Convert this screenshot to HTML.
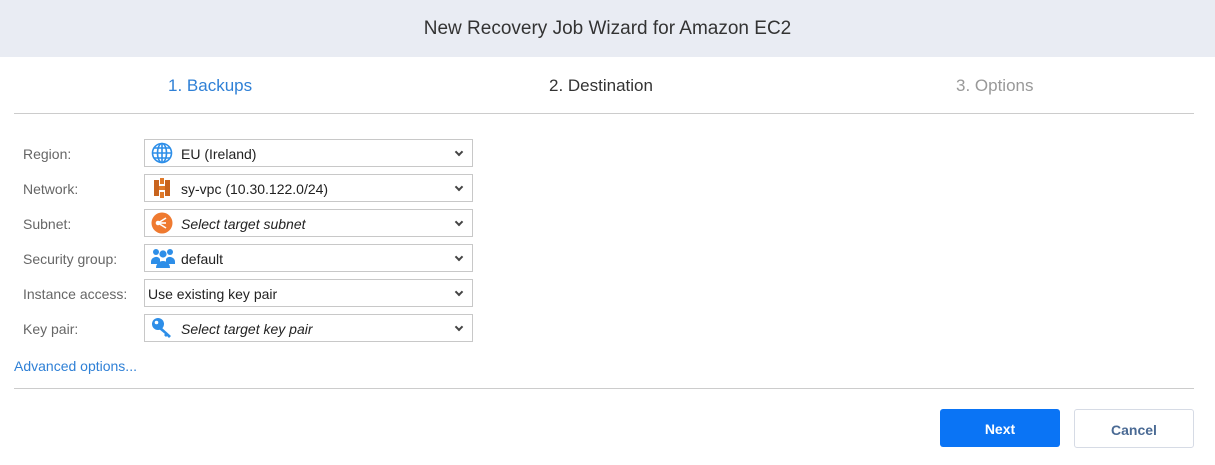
<!DOCTYPE html>
<html><head><style>
body{margin:0;width:1215px;height:465px;background:#fff;font-family:"Liberation Sans",sans-serif;position:relative;overflow:hidden}
.hdr{position:absolute;left:0;top:0;width:1215px;height:57px;background:#e9ecf3;text-align:center;line-height:57px;font-size:19px;color:#333}
.tab{position:absolute;top:76px;font-size:17px}
.line{position:absolute;left:14px;width:1180px;height:1px;background:#ccc}
.lbl{position:absolute;left:23px;font-size:14px;color:#666}
.box{position:absolute;left:144px;width:327px;height:26px;border:1px solid #c8c8c8;font-size:14px;color:#222;line-height:28px}
.box span{position:absolute;left:36px}
.box i{font-style:italic}
.ic{position:absolute;left:6px;top:2px}
.chev{position:absolute;right:10px;top:9px;width:4px;height:4px;border-right:2px solid #444;border-bottom:2px solid #444;transform:rotate(45deg)}
.btn{position:absolute;top:409px;width:118px;height:38px;border-radius:3px;text-align:center;line-height:40px;font-size:14px;font-weight:bold}
</style></head><body>
<div class="hdr">New Recovery Job Wizard for Amazon EC2</div>
<div class="tab" style="left:168px;color:#2f80d6">1. Backups</div>
<div class="tab" style="left:549px;color:#333">2. Destination</div>
<div class="tab" style="left:956px;color:#999">3. Options</div>
<div class="line" style="top:113px"></div>

<div class="lbl" style="top:146px">Region:</div>
<div class="box" style="top:139px"><svg class="ic" width="22" height="22" viewBox="0 0 22 22"><g fill="none" stroke="#2d8ee8" stroke-width="1.6"><circle cx="11" cy="11" r="9.5"/><ellipse cx="11" cy="11" rx="4.5" ry="9.5"/><line x1="11" y1="1.5" x2="11" y2="20.5"/><line x1="1.5" y1="11" x2="20.5" y2="11"/><path d="M3 6h16M3 16h16"/></g></svg><span>EU (Ireland)</span><div class="chev"></div></div>

<div class="lbl" style="top:181px">Network:</div>
<div class="box" style="top:174px"><svg class="ic" width="22" height="22" viewBox="0 0 22 22"><rect x="3" y="3" width="5" height="16" fill="#c8641e"/><rect x="14" y="3" width="5" height="16" fill="#c8641e"/><rect x="8" y="9" width="6" height="4" fill="#e07a2a"/><rect x="9" y="1" width="4" height="6" fill="#e07a2a"/><rect x="9" y="15" width="4" height="6" fill="#e07a2a"/></svg><span>sy-vpc (10.30.122.0/24)</span><div class="chev"></div></div>

<div class="lbl" style="top:216px">Subnet:</div>
<div class="box" style="top:209px"><svg class="ic" width="22" height="22" viewBox="0 0 22 22"><circle cx="11" cy="11" r="10.5" fill="#ef7a30"/><g stroke="#fff" stroke-width="1.6" fill="#fff"><line x1="7" y1="11" x2="15" y2="6"/><line x1="7" y1="11" x2="15" y2="11"/><line x1="7" y1="11" x2="15" y2="16"/><circle cx="7" cy="11" r="1.5"/></g></svg><span><i>Select target subnet</i></span><div class="chev"></div></div>

<div class="lbl" style="top:251px">Security group:</div>
<div class="box" style="top:244px"><svg class="ic" width="24" height="22" viewBox="0 0 24 22"><g fill="#2d8ee8"><circle cx="5" cy="5" r="3"/><circle cx="19" cy="5" r="3"/><circle cx="12" cy="7" r="3.6"/><path d="M0 15a5 5 0 0 1 9-3v5H0z"/><path d="M24 15a5 5 0 0 0-9-3v5h9z"/><path d="M5 21a7 7 0 0 1 14 0z"/></g></svg><span>default</span><div class="chev"></div></div>

<div class="lbl" style="top:286px">Instance access:</div>
<div class="box" style="top:279px"><span style="left:3px">Use existing key pair</span><div class="chev"></div></div>

<div class="lbl" style="top:321px">Key pair:</div>
<div class="box" style="top:314px"><svg class="ic" width="24" height="22" viewBox="0 0 24 22"><circle cx="7" cy="7" r="6" fill="#2d8ee8"/><circle cx="5.5" cy="5.5" r="1.8" fill="#fff"/><path d="M10 10l10 9-2 2-2-2-1 1-2-2 1-1-6-5z" fill="#2d8ee8"/></svg><span><i>Select target key pair</i></span><div class="chev"></div></div>

<div style="position:absolute;left:14px;top:358px;font-size:14px;color:#2f80d6">Advanced options...</div>
<div class="line" style="top:388px"></div>
<div class="btn" style="left:940px;background:#0a74f5;color:#fff;width:120px">Next</div>
<div class="btn" style="left:1074px;border:1px solid #d6dbe5;width:118px;height:37px;color:#4a6a94">Cancel</div>
</body></html>
